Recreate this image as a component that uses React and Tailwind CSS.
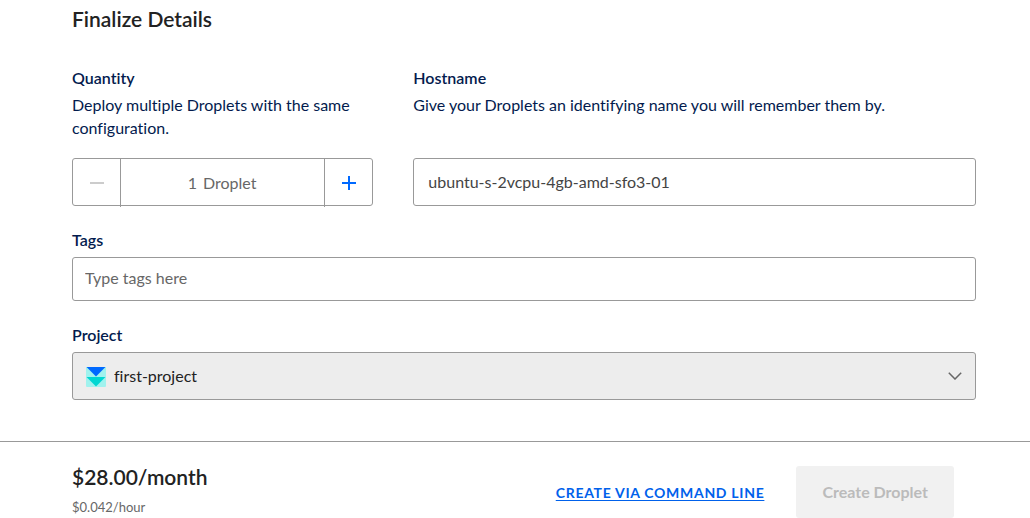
import { useState } from "react";

const fieldClass =
  "w-full rounded-[3px] border border-[#999999] bg-white text-base outline-none focus:border-[#0069ff]";

function FieldLabel({ htmlFor, children }) {
  return (
    <label htmlFor={htmlFor} className="block text-base leading-[22px] font-semibold text-[#031b4e]">
      {children}
    </label>
  );
}

function Quantity() {
  const [count, setCount] = useState("1");
  const value = Number(count) || 1;
  return (
    <div className="flex h-12 rounded-[3px] border border-[#999999]">
      <button
        type="button"
        aria-label="Decrease quantity"
        disabled={value <= 1}
        onClick={() => setCount(String(value - 1))}
        className="flex h-12 w-[47px] shrink-0 items-center justify-center text-[#0069ff] disabled:text-[#cccccc]"
      >
        <svg viewBox="0 0 14 14" className="size-3.5" fill="currentColor" aria-hidden="true">
          <rect x="0" y="6" width="14" height="2" />
        </svg>
      </button>
      <div className="flex h-12 flex-1 items-center justify-center gap-1.5 border-x border-[#999999] pr-1 text-base text-[#676767]">
        <input
          id="quantity"
          type="text"
          inputMode="numeric"
          value={count}
          onChange={(e) => setCount(e.target.value)}
          className="w-3 bg-transparent text-right outline-none"
        />
        <span>Droplet</span>
      </div>
      <button
        type="button"
        aria-label="Increase quantity"
        onClick={() => setCount(String(value + 1))}
        className="flex h-12 w-[47px] shrink-0 items-center justify-center text-[#0069ff]"
      >
        <svg viewBox="0 0 14 14" className="size-3.5" fill="currentColor" aria-hidden="true">
          <rect x="0" y="6" width="14" height="2" />
          <rect x="6" y="0" width="2" height="14" />
        </svg>
      </button>
    </div>
  );
}

export default function App() {
  const [hostname, setHostname] = useState("ubuntu-s-2vcpu-4gb-amd-sfo3-01");
  return (
    <form
      className="bg-white font-['Lato','Open_Sans',sans-serif] text-[#222222] [font-variant-ligatures:no-common-ligatures]"
      onSubmit={(e) => e.preventDefault()}
    >
      <main className="pt-[7px] pr-[54px] pb-[41px] pl-[72px]">
        <h2 className="text-[21px] leading-6 font-semibold">Finalize Details</h2>

        <div className="mt-9 flex gap-10">
          <div className="flex w-1/3 shrink-0 flex-col justify-between gap-[19px]">
            <div>
              <FieldLabel htmlFor="quantity">Quantity</FieldLabel>
              <p className="mt-1 text-base leading-[23px] text-[#031b4e]">
                Deploy multiple Droplets with the same configuration.
              </p>
            </div>
            <Quantity />
          </div>
          <div className="flex flex-1 flex-col justify-between gap-[19px]">
            <div>
              <FieldLabel htmlFor="hostname">Hostname</FieldLabel>
              <p className="mt-1 text-base leading-[23px] text-[#031b4e]">
                Give your Droplets an identifying name you will remember them by.
              </p>
            </div>
            <input
              id="hostname"
              type="text"
              value={hostname}
              onChange={(e) => setHostname(e.target.value)}
              className={`${fieldClass} h-12 px-3.5 pb-0.5 text-[#444444]`}
            />
          </div>
        </div>

        <div className="mt-[23px]">
          <FieldLabel htmlFor="tags">Tags</FieldLabel>
          <input
            id="tags"
            type="text"
            placeholder="Type tags here"
            className={`${fieldClass} mt-1.5 h-11 px-3 pb-1 placeholder:text-[#676767]`}
          />
        </div>

        <div className="mt-[23px]">
          <FieldLabel htmlFor="project">Project</FieldLabel>
          <div className="mt-1.5 grid items-center">
            <select
              id="project"
              className="col-start-1 row-start-1 h-12 w-full appearance-none rounded-[3px] border border-[#999999] bg-[#ededed] pr-10 pl-[41px] text-base text-[#222222] outline-none"
            >
              <option>first-project</option>
            </select>
            <svg
              viewBox="0 0 20 20"
              className="pointer-events-none col-start-1 row-start-1 mt-0.5 ml-3.5 size-5"
              aria-hidden="true"
            >
              <rect width="20" height="20" rx="1" fill="#a0f2ee" />
              <path d="M0.5 0H19.5L10 9.5Z" fill="#0069ff" />
              <path d="M0.5 10H19.5L10 19.5Z" fill="#00d7d2" />
            </svg>
            <svg
              viewBox="0 0 14 8"
              className="pointer-events-none col-start-1 row-start-1 mr-3.5 h-2 w-3.5 justify-self-end"
              fill="none"
              stroke="#676767"
              strokeWidth="1.5"
              aria-hidden="true"
            >
              <path d="M0.8 0.8L7 7L13.2 0.8" />
            </svg>
          </div>
        </div>
      </main>

      <footer className="flex justify-between border-t border-[#999999] pt-6 pr-[76px] pl-[72px]">
        <div>
          <p className="text-[21px] leading-[22px] font-semibold">$28.00/month</p>
          <p className="mt-2 text-[13px] leading-[22px] text-[#676767]">$0.042/hour</p>
        </div>
        <div className="flex items-center gap-8">
          <a
            href="#command-line"
            className="pt-0.5 text-sm font-bold tracking-wider text-[#0061eb] uppercase underline underline-offset-2"
          >
            Create via command line
          </a>
          <button
            type="submit"
            disabled
            className="h-[52px] rounded-[3px] bg-[#f1f1f1] px-[26px] text-base font-bold text-[#bbbbbb]"
          >
            Create Droplet
          </button>
        </div>
      </footer>
    </form>
  );
}
